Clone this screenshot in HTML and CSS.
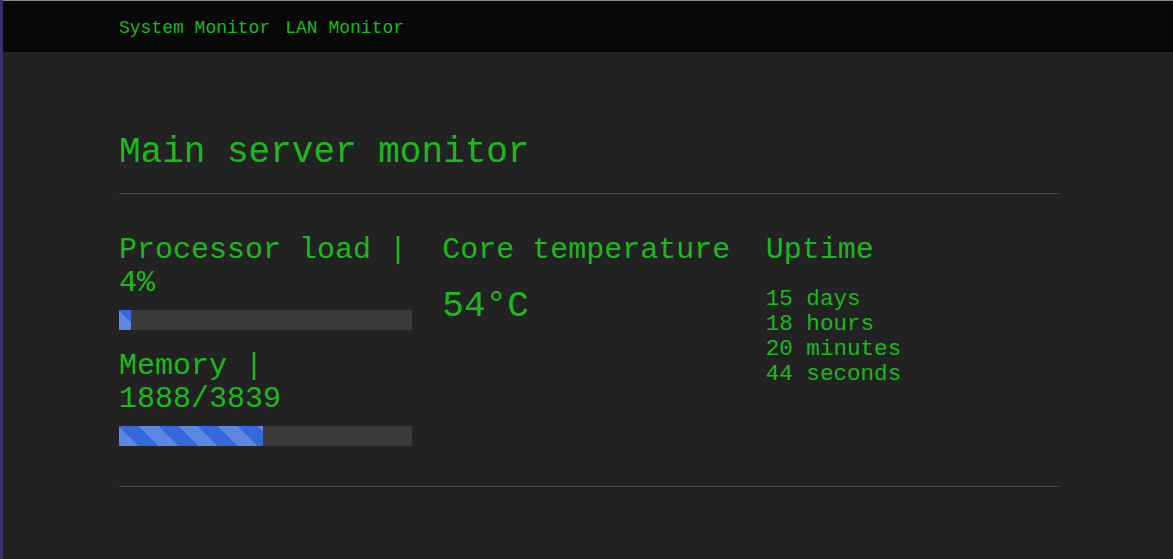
FILE: index.html
```html
<!DOCTYPE html>
<html lang="en">
<head>
<meta charset="utf-8">
<title>Main server monitor</title>
<link rel="stylesheet" href="styles.css">
</head>
<body>
<div class="page">
  <nav class="navbar">
    <div class="container nav-inner">
      <a class="nav-link" href="#">System Monitor</a>
      <a class="nav-link" href="#">LAN Monitor</a>
    </div>
  </nav>
  <main class="container">
    <header class="page-header">
      <h1 class="title">Main server monitor</h1>
    </header>
    <div class="stats">
      <section class="col">
        <h2 class="stat-title">Processor load | 4%</h2>
        <div class="progress"><div class="bar" style="width:4%"></div></div>
        <h2 class="stat-title">Memory | 1888/3839</h2>
        <div class="progress"><div class="bar" style="width:49.18%"></div></div>
      </section>
      <section class="col">
        <h2 class="stat-title">Core temperature</h2>
        <div class="temp">54°C</div>
      </section>
      <section class="col">
        <h2 class="stat-title">Uptime</h2>
        <ul class="uptime">
          <li>15 days</li>
          <li>18 hours</li>
          <li>20 minutes</li>
          <li>44 seconds</li>
        </ul>
      </section>
    </div>
    <hr class="divider">
  </main>
</div>
</body>
</html>
```
FILE: styles.css
```css
* { box-sizing: border-box; }

html, body {
  margin: 0;
  padding: 0;
  background: #222222;
}

body {
  font-family: "Courier New", "Liberation Mono", monospace;
  color: #1cb91c;
  min-height: 559px;
}

.page {
  min-height: 559px;
  border-left: 3px solid #3b2d6e;
  padding-left: 2px;
}

.container {
  width: 940px;
  margin: 0 auto;
}

.navbar {
  background: #080808;
  border-top: 1px solid #8a8a8a;
  height: 52px;
  margin-left: -2px;
}

.nav-inner {
  height: 51px;
  display: flex;
  align-items: center;
  gap: 15px;
  padding-left: 1px;
  padding-top: 2px;
}

.nav-link {
  color: #1cb91c;
  text-decoration: none;
  font-size: 18px;
  line-height: 20px;
}

.page-header {
  padding-top: 81px;
  padding-bottom: 20px;
  border-bottom: 1px solid #464646;
}

.title {
  margin: 0;
  font-size: 36px;
  line-height: 40px;
  font-weight: normal;
}

.stats {
  display: grid;
  grid-template-columns: repeat(3, 1fr);
  column-gap: 30px;
  padding-top: 20px;
}

.col {
  display: block;
}

.stat-title {
  margin: 20px 0 10px;
  font-size: 30px;
  line-height: 33px;
  font-weight: normal;
}

.progress {
  height: 20px;
  margin-bottom: 20px;
  background: #3a3a3a;
}

.bar {
  height: 100%;
  background-color: #3568da;
  background-image: repeating-linear-gradient(45deg, rgba(255,255,255,0.2) 0 14px, transparent 14px 28px);
}

.temp {
  margin-top: 20px;
  font-size: 36px;
  line-height: 40px;
}

.uptime {
  list-style: none;
  margin: 20px 0 0;
  padding: 0;
  font-size: 22.6px;
  line-height: 25px;
}

.divider {
  margin: 20px 0 0;
  border: 0;
  border-top: 1px solid #464646;
}
```
